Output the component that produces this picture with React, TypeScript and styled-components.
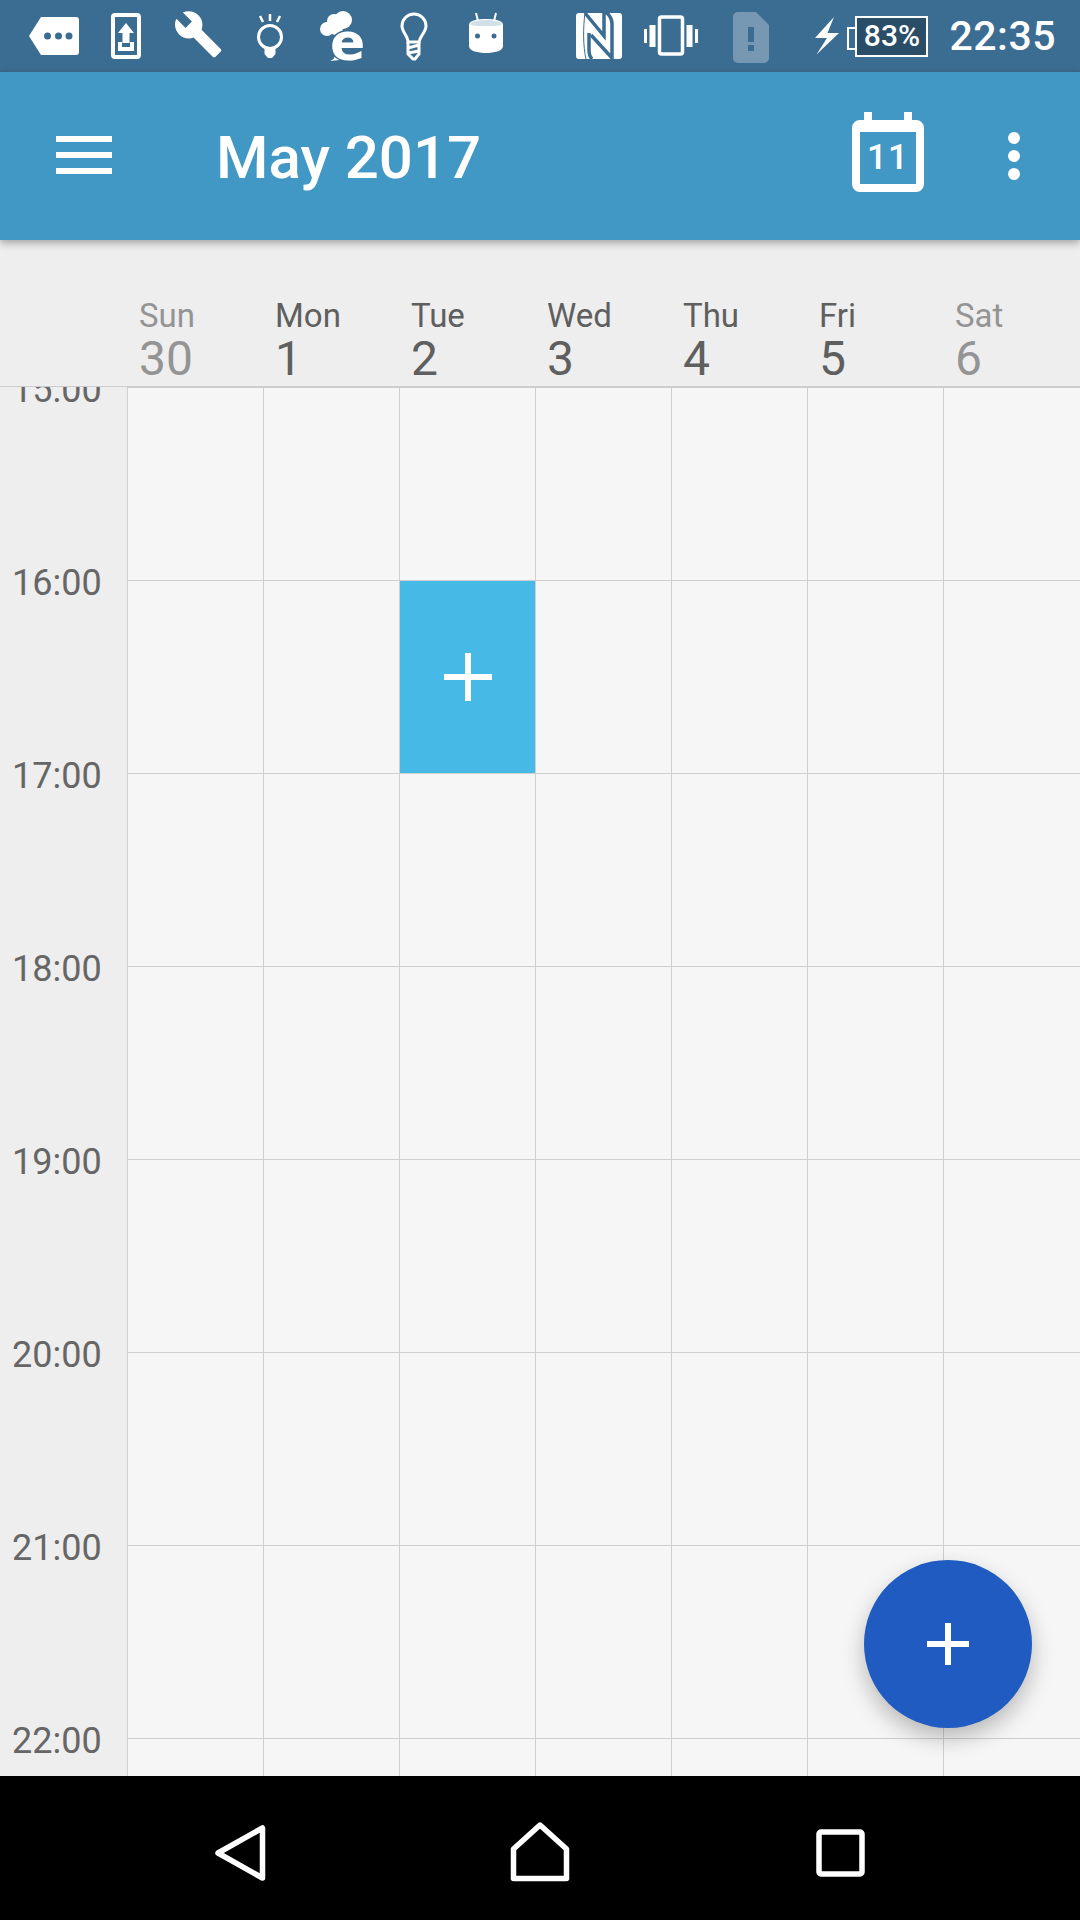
import React from 'react';
import styled, { createGlobalStyle } from 'styled-components';

const GlobalStyle = createGlobalStyle`
  html, body {
    margin: 0;
    padding: 0;
    background: #000;
  }
  * {
    box-sizing: border-box;
  }
`;

const Screen = styled.div`
  position: relative;
  display: flex;
  flex-direction: column;
  width: 1080px;
  height: 1920px;
  overflow: hidden;
  background: #eeeeee;
  font-family: Roboto, "Liberation Sans", sans-serif;
`;

const StatusBar = styled.div`
  display: flex;
  align-items: center;
  justify-content: space-between;
  flex: 0 0 72px;
  padding: 0 24px 0 18px;
  background: #3b6c91;
  color: #fff;
`;

const StatusGroup = styled.div`
  display: flex;
  align-items: center;
`;

const Slot = styled.svg<{ $gap?: number }>`
  display: block;
  flex: 0 0 72px;
  width: 72px;
  height: 72px;
  margin-left: ${(p) => p.$gap || 0}px;
`;

const Bolt = styled.svg`
  display: block;
  width: 24px;
  height: 38px;
  margin-left: 28px;
`;

const Battery = styled.div`
  position: relative;
  display: flex;
  align-items: center;
  justify-content: center;
  width: 73px;
  height: 41px;
  margin-left: 16px;
  border: 2px solid #fff;
  background: #2a4d68;
  font-size: 30px;
  font-weight: 500;
  line-height: 1;

  &::before {
    content: '';
    position: absolute;
    left: -10px;
    top: 9px;
    width: 8px;
    height: 19px;
    border: 2px solid #fff;
    border-right: 0;
  }
`;

const Clock = styled.div`
  margin-left: 21px;
  font-size: 41px;
  font-weight: 500;
  letter-spacing: 0.5px;
  line-height: 1;
`;

const AppBar = styled.header`
  position: relative;
  z-index: 2;
  display: flex;
  align-items: center;
  flex: 0 0 168px;
  padding: 0 60px 0 56px;
  background: #4298c4;
  box-shadow: 0 3px 8px rgba(0, 0, 0, 0.32);
  color: #fff;
`;

const MenuButton = styled.div`
  display: flex;
  flex-direction: column;
  gap: 10px;
  width: 56px;
  margin-bottom: 2px;
`;

const MenuLine = styled.span`
  display: block;
  height: 6px;
  background: #fff;
`;

const Title = styled.h1`
  margin: 4px 0 0 104px;
  font-size: 60px;
  font-weight: 500;
  line-height: 1;
`;

const TodayIcon = styled.svg`
  display: block;
  width: 72px;
  height: 80px;
  margin: 0 0 8px auto;
`;

const MoreButton = styled.div`
  display: flex;
  flex-direction: column;
  gap: 6px;
  margin-left: 84px;
`;

const MoreDot = styled.span`
  display: block;
  width: 12px;
  height: 12px;
  border-radius: 50%;
  background: #fff;
`;

const WeekHeader = styled.div`
  display: grid;
  grid-template-columns: 127px repeat(6, 136px) 1fr;
  flex: 0 0 147px;
  border-bottom: 1px solid #cccccc;
`;

const DayCell = styled.div<{ $weekend?: boolean }>`
  display: flex;
  flex-direction: column;
  justify-content: flex-end;
  padding: 0 0 3px 12px;
  color: ${(p) => (p.$weekend ? '#949494' : '#5f5f5f')};
`;

const DayName = styled.span`
  font-size: 33px;
  line-height: 38px;
`;

const DayNumber = styled.span`
  font-size: 48px;
  line-height: 48px;
`;

const Schedule = styled.main`
  flex: 1;
  min-height: 0;
  overflow: hidden;
`;

const HourRow = styled.div`
  display: grid;
  grid-template-columns: 127px repeat(6, 136px) 1fr;
  height: 193px;
`;

const HourLabel = styled.div`
  height: 0;
  margin-top: 3px;
  padding-left: 12px;
  color: #666666;
  font-size: 36px;
  line-height: 1;

  span {
    display: block;
    transform: translateY(-50%);
  }
`;

const HourCell = styled.div`
  border-left: 1px solid #cfcfcf;
  border-top: 1px solid #cfcfcf;
  background: #f6f6f6;
`;

const NewEventTile = styled.div`
  display: flex;
  align-items: center;
  justify-content: center;
  height: 100%;
  background: #47b9e6;
`;

const PlusIcon = styled.svg<{ $size: number }>`
  display: block;
  width: ${(p) => p.$size}px;
  height: ${(p) => p.$size}px;
`;

const Fab = styled.button`
  position: absolute;
  left: 864px;
  top: 1560px;
  display: flex;
  align-items: center;
  justify-content: center;
  width: 168px;
  height: 168px;
  padding: 0;
  border: 0;
  border-radius: 50%;
  background: #1f5bc0;
  box-shadow: 0 10px 22px rgba(0, 0, 0, 0.25);
`;

const NavBar = styled.nav`
  display: grid;
  grid-template-columns: repeat(3, 300px);
  flex: 0 0 144px;
  padding: 0 90px;
  background: #000;
`;

const NavSlot = styled.div`
  display: flex;
  align-items: center;
  justify-content: center;
`;

const NavIcon = styled.svg`
  display: block;
  width: 72px;
  height: 72px;
  fill: none;
  stroke: #fff;
  stroke-width: 5.5;
  stroke-linejoin: round;
`;

const BAR_COLOR = '#3b6c91';

const Plus = ({ size }: { size: number }) => (
  <PlusIcon $size={size} viewBox={`0 0 ${size} ${size}`}>
    <rect x={(size - 6) / 2} y={0} width={6} height={size} fill="#fff" />
    <rect x={0} y={(size - 6) / 2} width={size} height={6} fill="#fff" />
  </PlusIcon>
);

const StatusIcons = () => (
  <StatusGroup>
    <Slot viewBox="0 0 72 72">
      <path d="M23 17H58a3 3 0 0 1 3 3V52a3 3 0 0 1-3 3H23L11 36Z" fill="#fff" />
      <circle cx="29.5" cy="36" r="3.5" fill={BAR_COLOR} />
      <circle cx="40.5" cy="36" r="3.5" fill={BAR_COLOR} />
      <circle cx="51" cy="36" r="3.5" fill={BAR_COLOR} />
    </Slot>
    <Slot viewBox="0 0 72 72">
      <rect x="23" y="15" width="26" height="42" rx="2" fill="none" stroke="#fff" strokeWidth="4" />
      <path d="M36 23L44 33H39.5V43H32.5V33H28Z" fill="#fff" />
      <path d="M28 42H32V47H40V42H44V51H28Z" fill="#fff" />
    </Slot>
    <Slot viewBox="0 0 72 72">
      <path
        transform="translate(11 9) scale(2.1)"
        d="M22.7 19l-9.1-9.1c.9-2.3.4-5-1.5-6.9-2-2-5-2.4-7.4-1.3L9 6 6 9 1.6 4.7C.4 7.1.9 10.1 2.9 12.1c1.9 1.9 4.6 2.4 6.9 1.5l9.1 9.1c.4.4 1 .4 1.4 0l2.3-2.3c.5-.4.5-1.1.1-1.4z"
        fill="#fff"
      />
    </Slot>
    <Slot viewBox="0 0 72 72">
      <circle cx="36" cy="37" r="11.5" fill="none" stroke="#fff" strokeWidth="3" />
      <path d="M30.5 47H41.5V54L38 58H34L30.5 54Z" fill="#fff" />
      <path d="M36 14V21M26 16L29 22M46 16L43 22" stroke="#fff" strokeWidth="2.5" fill="none" />
    </Slot>
    <Slot viewBox="0 0 72 72">
      <circle cx="37" cy="20" r="9" fill="#fff" />
      <circle cx="28" cy="21" r="7" fill="#fff" />
      <circle cx="21" cy="29" r="7" fill="#fff" />
      <circle cx="30" cy="28" r="7" fill="#fff" />
      <path d="M24 61C27 60 29 58 29 55L34 60Z" fill="#fff" />
      <text
        x="24"
        y="60"
        fontFamily="DejaVu Sans"
        fontWeight="700"
        fontSize="52"
        fill="#fff"
        stroke={BAR_COLOR}
        strokeWidth="3"
        paintOrder="stroke"
      >
        e
      </text>
    </Slot>
    <Slot viewBox="0 0 72 72">
      <path
        d="M30 42C30 36 24 32 24 26A12 12 0 0 1 48 26C48 32 42 36 41 42Z"
        fill="none"
        stroke="#fff"
        strokeWidth="3"
      />
      <path d="M30 42V54L35 59H37L41 54V42M30 48L41 45M30 53L41 51" fill="none" stroke="#fff" strokeWidth="3" />
    </Slot>
    <Slot viewBox="0 0 72 72">
      <path d="M19 25C19 20 28 19 36 19S53 20 53 25V46C53 51 44 53 36 53S19 51 19 46Z" fill="#fff" />
      <path d="M20 24C22 21 29 20 36 20S50 21 52 24C50 26 44 26 36 26S22 26 20 24Z" fill="#cfe0e8" />
      <path d="M28 21L26 13M44 21L46 13" stroke="#fff" strokeWidth="2" />
      <circle cx="27.5" cy="36" r="2.5" fill={BAR_COLOR} />
      <circle cx="44" cy="36" r="2.5" fill={BAR_COLOR} />
    </Slot>
  </StatusGroup>
);

const SystemIcons = () => (
  <StatusGroup>
    <Slot viewBox="0 0 72 72">
      <rect x="13" y="13" width="46" height="46" rx="3" fill="#fff" />
      <path
        d="M22 13L41 36V13H44C47 16 49 19 49 24V58L28 35"
        fill="none"
        stroke={BAR_COLOR}
        strokeWidth="3.5"
      />
      <path d="M26 33V50C26 54 27 57 29 59" fill="none" stroke={BAR_COLOR} strokeWidth="3.5" />
      <path d="M22 13C20 28 20 46 23 59" fill="none" stroke={BAR_COLOR} strokeWidth="1" />
    </Slot>
    <Slot viewBox="0 0 72 72">
      <rect x="24.5" y="17" width="23" height="37" rx="2" fill="none" stroke="#fff" strokeWidth="3.5" />
      <path d="M14.5 25H20.5V47H14.5ZM51.5 25H57.5V47H51.5ZM9 29H12V43H9ZM60 29H63V43H60Z" fill="#fff" />
    </Slot>
    <Slot $gap={8} viewBox="0 0 72 72">
      <path
        fillRule="evenodd"
        d="M23 12H41L54 25V58a5 5 0 0 1-5 5H23a5 5 0 0 1-5-5V17a5 5 0 0 1 5-5ZM33 27V42H39V27ZM33 45V51H39V45Z"
        fill="#fff"
        opacity="0.3"
      />
    </Slot>
    <Bolt viewBox="0 0 24 38">
      <path d="M19 0L0 21H12L1.5 37.5L24 16H12.5Z" fill="#fff" />
    </Bolt>
    <Battery>83%</Battery>
    <Clock>22:35</Clock>
  </StatusGroup>
);

const DAYS = [
  { name: 'Sun', date: 30, weekend: true },
  { name: 'Mon', date: 1 },
  { name: 'Tue', date: 2 },
  { name: 'Wed', date: 3 },
  { name: 'Thu', date: 4 },
  { name: 'Fri', date: 5 },
  { name: 'Sat', date: 6, weekend: true },
];

const HOURS = ['15:00', '16:00', '17:00', '18:00', '19:00', '20:00', '21:00', '22:00'];

export default function App() {
  return (
    <Screen>
      <GlobalStyle />
      <StatusBar>
        <StatusIcons />
        <SystemIcons />
      </StatusBar>

      <AppBar>
        <MenuButton>
          <MenuLine />
          <MenuLine />
          <MenuLine />
        </MenuButton>
        <Title>May 2017</Title>
        <TodayIcon viewBox="0 0 72 80">
          <path
            fillRule="evenodd"
            d="M12 0H20V8H52V0H60V8H64a8 8 0 0 1 8 8V72a8 8 0 0 1-8 8H8a8 8 0 0 1-8-8V16a8 8 0 0 1 8-8H12ZM8 20V72H64V20Z"
            fill="#fff"
          />
          <text
            x="36"
            y="57"
            textAnchor="middle"
            fontFamily="Roboto"
            fontWeight="500"
            fontSize="35"
            letterSpacing="1"
            fill="#fff"
          >
            11
          </text>
        </TodayIcon>
        <MoreButton>
          <MoreDot />
          <MoreDot />
          <MoreDot />
        </MoreButton>
      </AppBar>

      <WeekHeader>
        <div />
        {DAYS.map((day) => (
          <DayCell key={day.name} $weekend={day.weekend}>
            <DayName>{day.name}</DayName>
            <DayNumber>{day.date}</DayNumber>
          </DayCell>
        ))}
      </WeekHeader>

      <Schedule>
        {HOURS.map((hour) => (
          <HourRow key={hour}>
            <HourLabel>
              <span>{hour}</span>
            </HourLabel>
            {DAYS.map((day) => (
              <HourCell key={day.name}>
                {hour === '16:00' && day.name === 'Tue' && (
                  <NewEventTile>
                    <Plus size={48} />
                  </NewEventTile>
                )}
              </HourCell>
            ))}
          </HourRow>
        ))}
      </Schedule>

      <Fab>
        <Plus size={42} />
      </Fab>

      <NavBar>
        <NavSlot>
          <NavIcon viewBox="0 0 72 72">
            <path d="M58.5 16V66L14 41Z" />
          </NavIcon>
        </NavSlot>
        <NavSlot>
          <NavIcon viewBox="0 0 72 72">
            <path d="M36 13L62.5 37V66.5H9.5V37Z" />
          </NavIcon>
        </NavSlot>
        <NavSlot>
          <NavIcon viewBox="0 0 72 72">
            <rect x="15" y="20" width="43" height="42" rx="2" />
          </NavIcon>
        </NavSlot>
      </NavBar>
    </Screen>
  );
}
